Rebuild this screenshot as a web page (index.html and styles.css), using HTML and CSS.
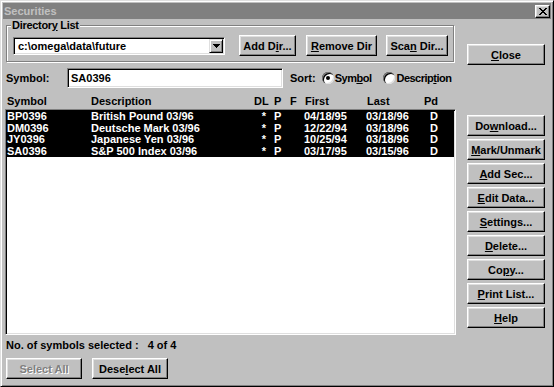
FILE: index.html
```html
<!DOCTYPE html>
<html>
<head>
<meta charset="utf-8">
<link rel="stylesheet" href="styles.css">
</head>
<body>
<div class="window">
  <div class="titlebar">
    <span class="title">Securities</span>
    <span class="tclose">
      <svg width="8" height="7" viewBox="0 0 8 7" shape-rendering="crispEdges">
        <path d="M0 0h2v1h-2zM6 0h2v1h-2zM1 1h2v1h-2zM5 1h2v1h-2zM2 2h4v1h-4zM3 3h2v1h-2zM2 4h4v1h-4zM1 5h2v1h-2zM5 5h2v1h-2zM0 6h2v1h-2zM6 6h2v1h-2z" fill="#000"/>
      </svg>
    </span>
  </div>
  <div class="body">
    <div class="left">
      <fieldset class="group">
        <legend>Director<u>y</u> List</legend>
        <div class="dirrow">
          <div class="combo">
            <span class="combo-text">c:\omega\data\future</span>
            <span class="combo-btn">
              <svg width="7" height="4" viewBox="0 0 7 4" shape-rendering="crispEdges"><path d="M0 0h7v1h-7zM1 1h5v1h-5zM2 2h3v1h-3zM3 3h1v1h-1z" fill="#000"/></svg>
            </span>
          </div>
          <button class="btn b-add">Add D<u>i</u>r...</button>
          <button class="btn b-remove"><u>R</u>emove Dir</button>
          <button class="btn b-scan">Sca<u>n</u> Dir...</button>
        </div>
      </fieldset>

      <div class="symrow">
        <span class="symlabel">Symbol:</span>
        <div class="field">SA0396</div>
        <span class="sortlabel">Sort:</span>
        <span class="radio checked"></span><span class="rtext">Sym<u>b</u>ol</span>
        <span class="radio r2"></span><span class="rtext">Descrip<u>t</u>ion</span>
      </div>

      <div class="cols header">
        <span>Symbol</span><span>Description</span><span>DL</span><span>P</span><span>F</span><span class="hfirst">First</span><span class="hlast">Last</span><span>Pd</span>
      </div>

      <div class="listbox">
        <div class="cols row sel"><span>BP0396</span><span>British Pound 03/96</span><span class="c">*</span><span>P</span><span></span><span>04/18/95</span><span>03/18/96</span><span class="d">D</span></div>
        <div class="cols row sel"><span>DM0396</span><span>Deutsche Mark 03/96</span><span class="c">*</span><span>P</span><span></span><span>12/22/94</span><span>03/18/96</span><span class="d">D</span></div>
        <div class="cols row sel"><span>JY0396</span><span>Japanese Yen 03/96</span><span class="c">*</span><span>P</span><span></span><span>10/25/94</span><span>03/18/96</span><span class="d">D</span></div>
        <div class="cols row sel"><span>SA0396</span><span>S&amp;P 500 Index 03/96</span><span class="c">*</span><span>P</span><span></span><span>03/17/95</span><span>03/15/96</span><span class="d">D</span></div>
      </div>

      <div class="status">No. of symbols selected :<span class="count">4 of 4</span></div>

      <div class="bottom">
        <button class="btn b-wide disabled">Select All</button>
        <button class="btn b-wide">Dese<u>l</u>ect All</button>
      </div>
    </div>

    <div class="right">
      <button class="btn b-side b-close"><u>C</u>lose</button>
      <div class="stack">
        <button class="btn b-side">Do<u>w</u>nload...</button>
        <button class="btn b-side"><u>M</u>ark/Unmark</button>
        <button class="btn b-side"><u>A</u>dd Sec...</button>
        <button class="btn b-side"><u>E</u>dit Data...</button>
        <button class="btn b-side"><u>S</u>ettings...</button>
        <button class="btn b-side"><u>D</u>elete...</button>
        <button class="btn b-side">Co<u>p</u>y...</button>
        <button class="btn b-side"><u>P</u>rint List...</button>
        <button class="btn b-side"><u>H</u>elp</button>
      </div>
    </div>
  </div>
</div>
</body>
</html>
```

FILE: styles.css
```css
* { box-sizing: border-box; }

body {
  margin: 0;
  background: #c0c0c0;
  font: bold 11px "Liberation Sans", Arial, sans-serif;
  color: #000;
}

.window {
  width: 554px;
  height: 387px;
  background: #c0c0c0;
  border: 1px solid;
  border-color: #dfdfdf #000 #000 #dfdfdf;
  box-shadow: inset 1px 1px #fff, inset -1px -1px #808080;
  padding: 2px;
  display: flex;
  flex-direction: column;
}

.titlebar {
  height: 16px;
  background: #808080;
  color: #c0c0c0;
  display: flex;
  align-items: center;
  justify-content: space-between;
  padding: 0 1px 0 1px;
}

.title { line-height: 16px; }

.tclose {
  width: 15px;
  height: 13px;
  background: #c0c0c0;
  border: 1px solid;
  border-color: #fff #000 #000 #fff;
  box-shadow: inset -1px -1px #808080, inset 1px 1px #dfdfdf;
  display: flex;
  align-items: center;
  justify-content: center;
}

.body {
  flex: 1;
  display: grid;
  grid-template-columns: 451px 78px;
  column-gap: 11px;
  padding-left: 2px;
}

.left { display: flex; flex-direction: column; }

.group {
  margin: 0 0 0 1px;
  width: 448px;
  min-width: 0;
  padding: 4px 6px 5px 6px;
  border: 1px solid #808080;
  box-shadow: 1px 1px 0 #fff, inset 1px 1px 0 #fff;
}

.group legend {
  padding: 0 1px;
  margin-left: -2px;
  line-height: 12px;
  letter-spacing: -0.3px;
  background: #c0c0c0;
}

.dirrow { display: flex; align-items: center; height: 21px; }

.combo {
  flex-shrink: 0;
  width: 212px;
  height: 18px;
  background: #fff;
  border: 1px solid;
  border-color: #808080 #fff #fff #808080;
  box-shadow: inset 1px 1px #000, inset -1px -1px #dfdfdf;
  padding: 2px 2px 2px 4px;
  display: flex;
  align-items: center;
  justify-content: space-between;
}

.combo-btn {
  width: 14px;
  height: 14px;
  margin-right: -1px;
  background: #c0c0c0;
  border: 1px solid;
  border-color: #dfdfdf #000 #000 #dfdfdf;
  box-shadow: inset 1px 1px #fff, inset -1px -1px #808080;
  display: flex;
  align-items: center;
  justify-content: center;
}

.btn {
  flex-shrink: 0;
  font: inherit;
  color: #000;
  height: 21px;
  padding: 0;
  background: #c0c0c0;
  border: 1px solid;
  border-color: #fff #000 #000 #fff;
  box-shadow: inset -1px -1px #808080, inset 1px 1px #dfdfdf;
  text-align: center;
  white-space: nowrap;
}

.b-add { width: 57px; margin-left: 14px; }
.b-remove { width: 71px; margin-left: 10px; }
.b-scan { width: 62px; margin-left: 9px; }

.symrow {
  display: flex;
  align-items: center;
  height: 20px;
  margin-top: 6px;
  white-space: nowrap;
}

.symrow > * { flex-shrink: 0; }

.symlabel { width: 61px; margin-left: 1px; }

.field {
  width: 216px;
  height: 20px;
  background: #fff;
  border: 1px solid;
  border-color: #808080 #fff #fff #808080;
  box-shadow: inset 1px 1px #000, inset -1px -1px #dfdfdf;
  padding: 0 3px;
  line-height: 18px;
}

.sortlabel { margin-left: 7px; margin-right: 6px; }

.rtext { letter-spacing: -0.5px; }

.radio {
  width: 12px;
  height: 12px;
  border-radius: 50%;
  background: #fff;
  box-shadow: inset 1px 1px #808080, inset 2px 2px #000, inset -1px -1px #dfdfdf;
  position: relative;
  margin-right: 1px;
}

.radio.checked::after {
  content: "";
  position: absolute;
  left: 4px;
  top: 4px;
  width: 4px;
  height: 4px;
  border-radius: 50%;
  background: #000;
}

.r2 { margin-left: 12px; }

.cols {
  display: grid;
  grid-template-columns: 84px 163px 20px 16px 14px 62px 58px 1fr;
  white-space: nowrap;
}

.header {
  margin-top: 7px;
  line-height: 13px;
  padding-left: 2px;
}

.hfirst { padding-left: 1px; }
.hlast { padding-left: 1px; }

.listbox {
  margin-top: 1px;
  height: 226px;
  background: #fff;
  border: 1px solid;
  border-color: #808080 #fff #fff #808080;
  box-shadow: inset 1px 1px #000, inset -1px -1px #dfdfdf;
  padding: 1px;
}

.row { height: 11.5px; line-height: 11.5px; }
.sel { background: #000; color: #fff; }
.row .c { text-align: center; }
.row .d { padding-left: 6px; }

.status {
  margin-top: 4px;
  line-height: 13px;
  padding-left: 1px;
}

.count { margin-left: 9px; }

.bottom {
  display: flex;
  gap: 10px;
  margin-top: 6px;
  padding-left: 1px;
}

.b-wide { width: 76px; }

.disabled { color: #808080; text-shadow: 1px 1px 0 #fff; }

.right { display: flex; flex-direction: column; }

.b-side { width: 78px; }
.b-close { margin-top: 25px; }

.stack {
  margin-top: 50px;
  display: flex;
  flex-direction: column;
  gap: 3px;
}
```
